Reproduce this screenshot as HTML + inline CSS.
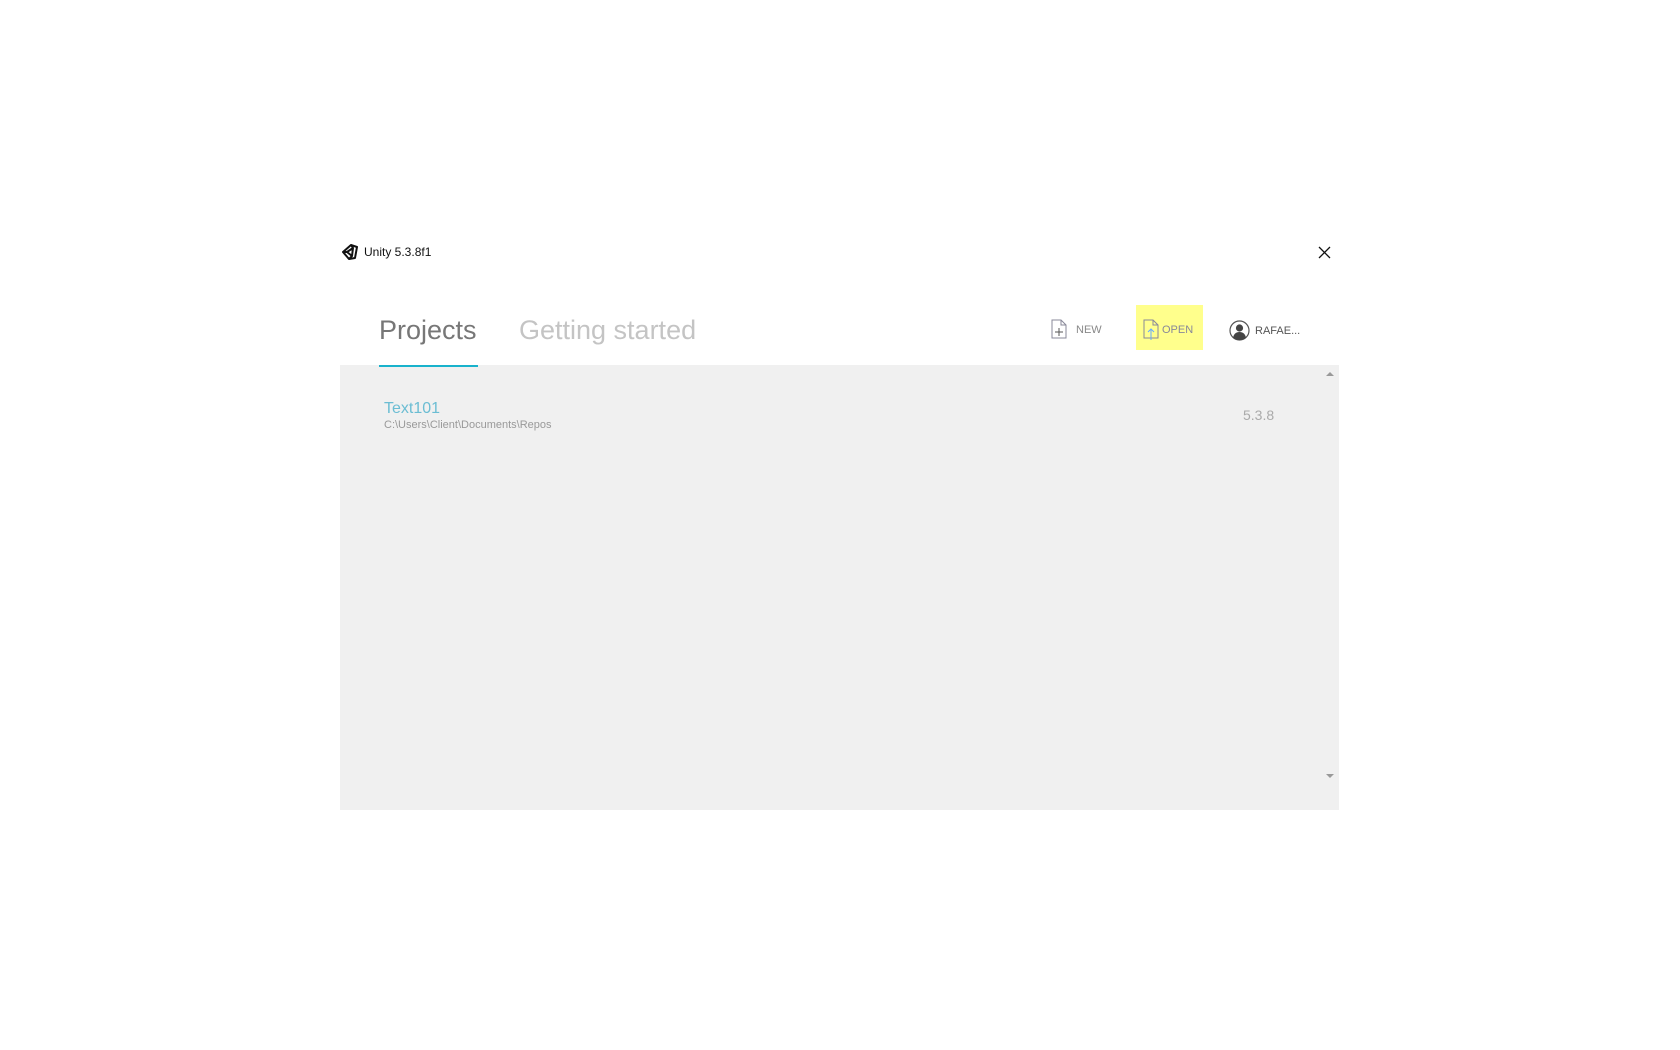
<!DOCTYPE html>
<html><head><meta charset="utf-8"><style>
html,body{margin:0;padding:0;background:#fff;width:1680px;height:1050px;overflow:hidden;font-family:"Liberation Sans",sans-serif;position:relative}
.a{position:absolute;white-space:nowrap}
</style></head><body>
<svg class="a" style="left:342px;top:244px" width="16" height="16" viewBox="0 0 16 16"><path d="M1 8 L9 1 L15 3 L13 14 L7 15 Z M5 8 L11 4 L10 12 Z" fill="none" stroke="#111" stroke-width="2" stroke-linejoin="round"/><path d="M5 8 H1 M11 4 L9 1 M10 12 L7 15" stroke="#111" stroke-width="2"/></svg>
<div class="a" style="left:364px;top:245px;font-size:12px;color:#111">Unity 5.3.8f1</div>
<svg class="a" style="left:1318px;top:246px" width="13" height="13"><path d="M1 1L12 12M12 1L1 12" stroke="#111" stroke-width="1.3"/></svg>
<div class="a" style="left:379px;top:315px;font-size:27px;color:#777">Projects</div>
<div class="a" style="left:519px;top:315px;font-size:27px;color:#c4c4c4">Getting started</div>
<svg class="a" style="left:1051px;top:319px" width="16" height="20"><path d="M1 1H10L15 6V19H1Z M10 1V6H15" fill="none" stroke="#889" stroke-width="1"/><path d="M8 9V17M4 13H12" stroke="#555" stroke-width="1"/></svg>
<div class="a" style="left:1076px;top:324px;font-size:11px;color:#888">NEW</div>
<div class="a" style="left:1136px;top:305px;width:67px;height:45px;background:#ffff8c"></div>
<svg class="a" style="left:1143px;top:319px" width="16" height="22"><path d="M1 1H10L15 6V19H1Z M10 1V6H15" fill="none" stroke="#889" stroke-width="1"/><path d="M8 21V10M5 13L8 10L11 13" fill="none" stroke="#6af" stroke-width="1"/></svg>
<div class="a" style="left:1162px;top:324px;font-size:11px;color:#889">OPEN</div>
<svg class="a" style="left:1229px;top:320px" width="21" height="21"><circle cx="10.5" cy="10.5" r="9.5" fill="#fff" stroke="#555" stroke-width="1.2"/><circle cx="10.5" cy="8" r="3.6" fill="#444"/><path d="M4 18Q5 12 10.5 12Q16 12 17 18Q10.5 22 4 18Z" fill="#444"/></svg>
<div class="a" style="left:1255px;top:325px;font-size:11px;color:#555">RAFAE...</div>
<div class="a" style="left:340px;top:365px;width:999px;height:445px;background:#f0f0f0"></div>
<div class="a" style="left:379px;top:365px;width:99px;height:2px;background:#19b2cc"></div>
<div class="a" style="left:384px;top:400px;font-size:16px;color:#6bbdd3">Text101</div>
<div class="a" style="left:384px;top:419px;font-size:11px;color:#999">C:\Users\Client\Documents\Repos</div>
<div class="a" style="left:1243px;top:407px;font-size:14px;color:#aaa">5.3.8</div>
<div class="a" style="left:1326px;top:372px;width:0;height:0;border-left:4px solid transparent;border-right:4px solid transparent;border-bottom:4px solid #999"></div>
<div class="a" style="left:1326px;top:774px;width:0;height:0;border-left:4px solid transparent;border-right:4px solid transparent;border-top:4px solid #999"></div>
</body></html>
